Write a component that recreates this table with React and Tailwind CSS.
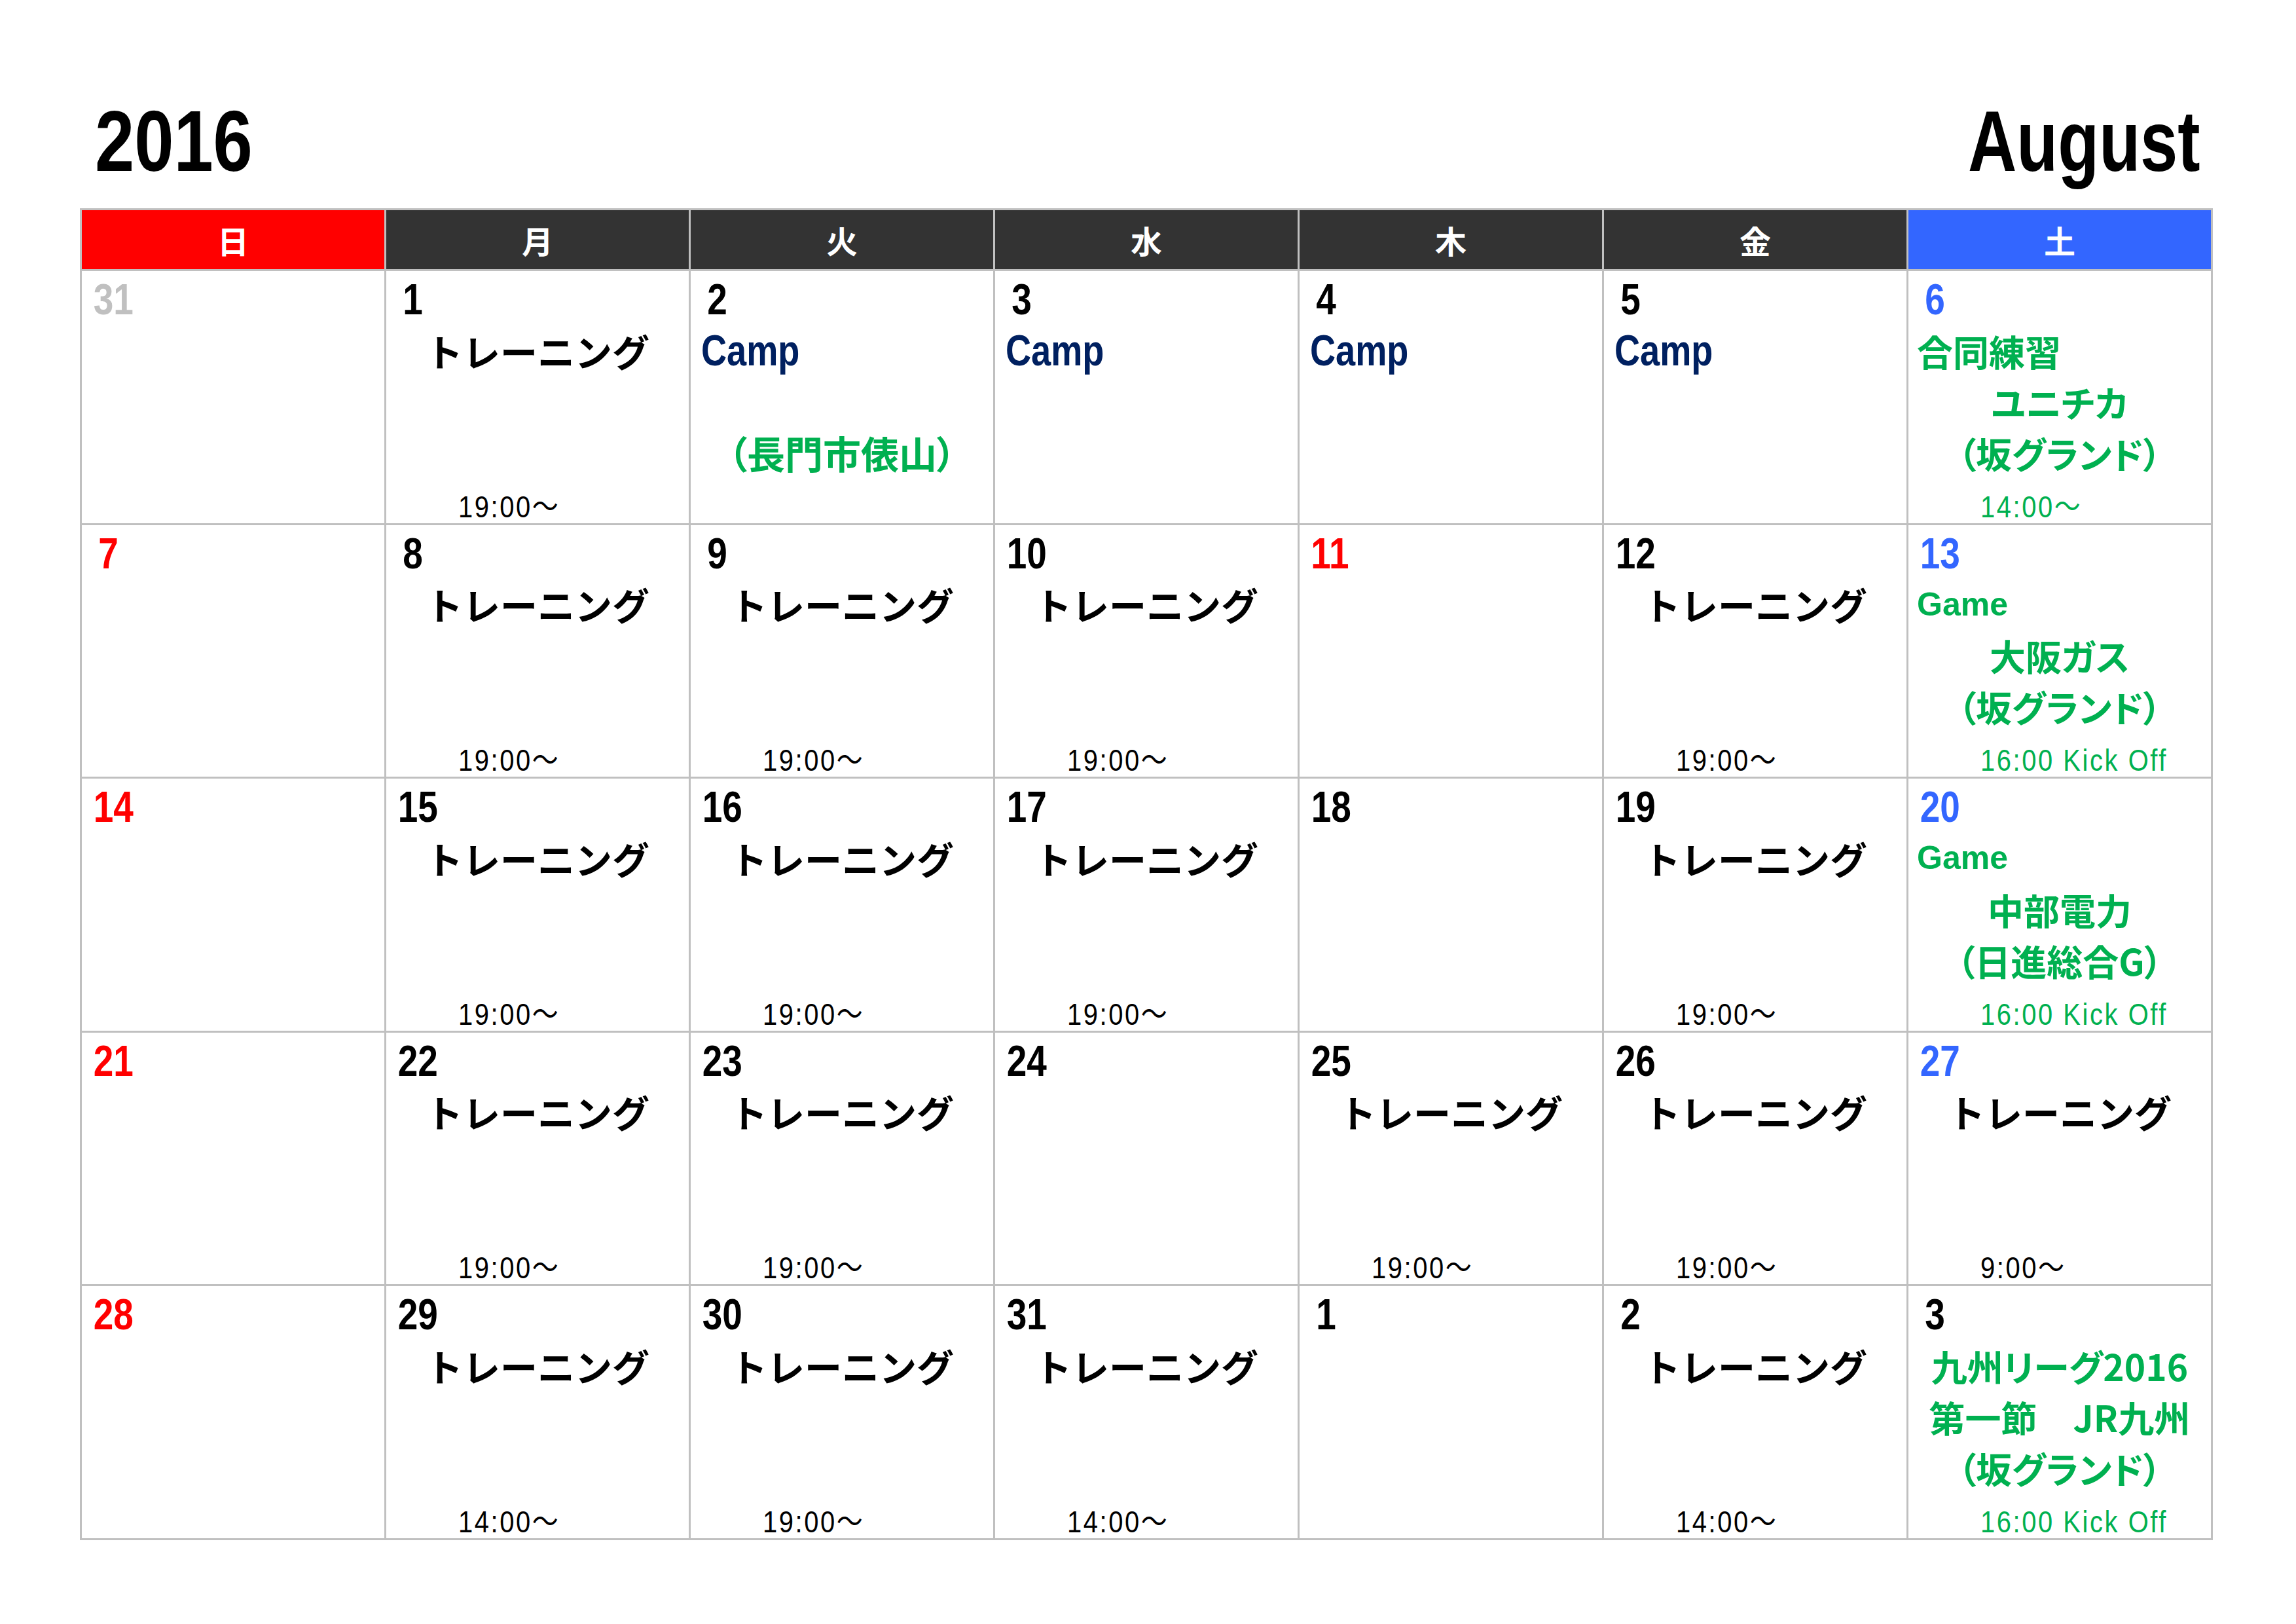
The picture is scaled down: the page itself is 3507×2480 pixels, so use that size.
const JP = "font-['Noto_Sans_CJK_JP',sans-serif]";
const SANS = "font-['Liberation_Sans','Noto_Sans_CJK_JP',sans-serif]";

const headings = [
    {label: '日', bg: 'bg-[#ff0000]'},
    {label: '月', bg: 'bg-[#333333]'},
    {label: '火', bg: 'bg-[#333333]'},
    {label: '水', bg: 'bg-[#333333]'},
    {label: '木', bg: 'bg-[#333333]'},
    {label: '金', bg: 'bg-[#333333]'},
    {label: '土', bg: 'bg-[#3366ff]'},
];

const dayColors = {
    gray: 'text-[#c0c0c0]',
    red: 'text-[#ff0000]',
    blue: 'text-[#3366ff]',
    black: 'text-black',
};

const lineStyles = {
    train: `justify-center text-black text-[57px] font-bold ${JP}`,
    camp: `pl-[16px] text-[#002060] text-[66px] font-bold ${SANS}`,
    greenLeft: `pl-[13px] text-[#00b050] text-[55px] font-bold ${JP} [font-feature-settings:'palt']`,
    game: `pl-[13px] text-[#00b050] text-[50px] font-bold ${SANS}`,
    greenCenter: `justify-center text-[#00b050] text-[55px] font-bold ${JP} [font-feature-settings:'palt']`,
    greenWide: `justify-center text-[#00b050] text-[58px] font-bold ${JP} [font-feature-settings:'palt']`,
};

const train = (time) => ({lines: [['train', 'トレーニング']], time});
const camp = {lines: [['camp', 'Camp']]};
const kickOff = '16:00 Kick Off';

const weeks = [
    [
        {day: '31', color: 'gray'},
        {day: '1', ...train('19:00～')},
        {day: '2', lines: [['camp', 'Camp'], null, ['greenWide', '（長門市俵山）']]},
        {day: '3', ...camp},
        {day: '4', ...camp},
        {day: '5', ...camp},
        {
            day: '6', color: 'blue',
            lines: [['greenLeft', '合同練習'], ['greenCenter', 'ユニチカ'], ['greenCenter', '（坂グランド）']],
            time: '14:00～', green: true,
        },
    ],
    [
        {day: '7', color: 'red'},
        {day: '8', ...train('19:00～')},
        {day: '9', ...train('19:00～')},
        {day: '10', ...train('19:00～')},
        {day: '11', color: 'red'},
        {day: '12', ...train('19:00～')},
        {
            day: '13', color: 'blue',
            lines: [['game', 'Game'], ['greenCenter', '大阪ガス'], ['greenCenter', '（坂グランド）']],
            time: kickOff, green: true,
        },
    ],
    [
        {day: '14', color: 'red'},
        {day: '15', ...train('19:00～')},
        {day: '16', ...train('19:00～')},
        {day: '17', ...train('19:00～')},
        {day: '18'},
        {day: '19', ...train('19:00～')},
        {
            day: '20', color: 'blue',
            lines: [['game', 'Game'], ['greenCenter', '中部電力'], ['greenCenter', '（日進総合G）']],
            time: kickOff, green: true,
        },
    ],
    [
        {day: '21', color: 'red'},
        {day: '22', ...train('19:00～')},
        {day: '23', ...train('19:00～')},
        {day: '24'},
        {day: '25', ...train('19:00～')},
        {day: '26', ...train('19:00～')},
        {day: '27', color: 'blue', ...train('9:00～')},
    ],
    [
        {day: '28', color: 'red'},
        {day: '29', ...train('14:00～')},
        {day: '30', ...train('19:00～')},
        {day: '31', ...train('14:00～')},
        {day: '1'},
        {day: '2', ...train('14:00～')},
        {
            day: '3',
            lines: [['greenCenter', '九州リーグ2016'], ['greenCenter', '第一節　JR九州'], ['greenCenter', '（坂グランド）']],
            time: kickOff, green: true,
        },
    ],
];

function DayCell({cell}) {
    const lines = cell.lines || [];
    return (
        <div className="h-[387.5px] border-r-[3px] border-b-[3px] border-[#c0c0c0] pt-[4px] flex flex-col">
            <div className="h-[78px] leading-[78px] pl-[11px]">
                <span className="inline-block w-[60px] text-center">
                    <span className={`inline-block scale-x-[0.82] text-[67px] font-bold ${SANS} ${dayColors[cell.color || 'black']}`}>
                        {cell.day}
                    </span>
                </span>
            </div>
            {lines.map((line, i) => (
                line
                    ? <div key={i} className={`h-[78px] flex items-center whitespace-nowrap leading-none ${lineStyles[line[0]]}`}>
                        {line[0] === 'camp'
                            ? <span className="inline-block origin-left scale-x-[0.82]">{line[1]}</span>
                            : line[1]}
                    </div>
                    : <div key={i} className="h-[78px]"/>
            ))}
            {cell.time &&
                <div className="mt-auto h-[50px] leading-[50px] pl-[110px] whitespace-nowrap">
                    <span className={`inline-block origin-left scale-x-[0.85] tracking-[3px] text-[47px] ${SANS} ${cell.green ? 'text-[#00b050]' : 'text-black'}`}>
                        {cell.time}
                    </span>
                </div>
            }
        </div>
    );
}

export default function App() {
    return (
        <div className="w-[3507px] h-[2480px] bg-white">
            <div className="ml-[122px] w-[3258px]">
                <div className={`h-[318px] pt-[150px] flex justify-between pl-[23px] pr-[19px] text-[132px] leading-none font-bold text-black ${SANS}`}>
                    <span className="inline-block origin-left scale-x-[0.82]">2016</span>
                    <span className="inline-block origin-right scale-x-[0.78]">August</span>
                </div>
                <div className="grid grid-cols-7 border-t-[3px] border-l-[3px] border-[#c0c0c0]">
                    {headings.map((h) => (
                        <div
                            key={h.label}
                            className={`h-[93px] flex items-center justify-center border-r-[3px] border-b-[3px] border-[#c0c0c0] text-white text-[48px] font-bold ${JP} ${h.bg}`}
                        >
                            {h.label}
                        </div>
                    ))}
                    {weeks.map((week, w) => week.map((cell, d) => (
                        <DayCell key={`${w}-${d}`} cell={cell}/>
                    )))}
                </div>
            </div>
        </div>
    );
}
